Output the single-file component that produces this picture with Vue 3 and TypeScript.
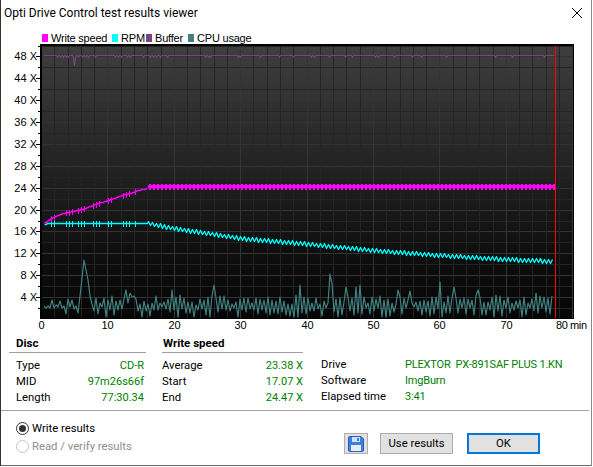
<script setup lang="ts">
const X0 = 41, PX_PER_MIN = 6.64, Y0 = 319, PX_PER_X = 5.47;

function rng(seed: number) {
  let s = seed;
  return () => {
    s = (s * 1664525 + 1013904223) % 4294967296;
    return s / 4294967296;
  };
}
function lerp(table: number[][], x: number) {
  for (let i = 1; i < table.length; i++) {
    if (x <= table[i][0]) {
      const [a, b] = [table[i - 1], table[i]];
      return a[1] + ((b[1] - a[1]) * (x - a[0])) / (b[0] - a[0]);
    }
  }
  return table[table.length - 1][1];
}
const bursts = [[50, 56], [65, 72], [78, 84], [93, 100], [107, 113], [122, 130], [134, 137]];
const inBurst = (x: number) => bursts.some(([a, b]) => x >= a && x <= b);

const speedBase = [[44, 223], [53, 217], [63, 213], [73, 211], [85, 208], [95, 204], [108, 200], [122, 195], [133, 192], [138, 190], [148, 188]];
const writeLine: string[] = [];
let writeTicks = "";
for (let x = 44; x < 148; x++) {
  const b = Math.round(lerp(speedBase, x));
  writeLine.push(`${x}.5,${b}.5`);
  if (inBurst(x) && x % 3 === 0) writeTicks += `M${x}.5 ${b - 2}V${b + 4}`;
}
for (let x = 148; x <= 553; x += 4) {
  writeTicks += `M${x + 1}.5 184V${x % 16 === 1 ? 191 : 190}M${x + 2}.5 184V190`;
}

const rpmBase = [[44, 224], [50, 222.5], [148, 223], [173, 228], [207, 233], [240, 238], [300, 243], [372, 250], [438, 255], [505, 259], [553, 261]];
const rpmLine: string[] = [];
let rpmTicks = "";
for (let x = 44; x <= 553; x++) {
  const b = Math.round(lerp(rpmBase, x));
  if (x < 148) {
    rpmLine.push(`${x}.5,${b}.5`);
    if (inBurst(x) && x % 3 === 0) rpmTicks += `M${x}.5 ${b - 2}V${b + 4}`;
  } else if (x % 4 === 0) {
    rpmLine.push(`${x}.5,${b - 2}.5`);
  } else if (x % 4 === 2) {
    rpmLine.push(`${x}.5,${b + 2}.5`);
  }
}

const dips = [57, 60, 63, 66, 68, 78, 82, 85, 88, 95, 115, 118, 121, 127, 130, 143, 150, 153, 156, 160, 167, 205, 208, 210, 238, 240, 260, 279, 293, 311, 314, 329, 345, 352, 375, 378, 394, 412, 421, 446, 495, 512, 544];
const bufferPts: string[] = [];
for (let x = 44; x <= 554; x++) {
  if (x === 74) bufferPts.push(`${x}.5,65.5`);
  else if (x === 73 || x === 75) bufferPts.push(`${x}.5,57.5`);
  else bufferPts.push(`${x}.5,${dips.includes(x) ? 57.5 : 55.5}`);
}

const peaks: Record<number, number> = { 84: 260, 86: 270, 82: 278, 88: 280, 90: 296, 115: 287, 126: 290, 130: 293, 134: 296, 172: 290, 191: 293, 214: 285, 220: 296, 300: 285, 330: 274, 332: 284, 440: 282, 454: 287, 346: 287, 356: 287, 360: 285, 410: 291, 398: 290, 478: 290, 536: 293, 552: 296 };
const r = rng(42);
const cpuPts: string[] = [];
for (let x = 44; x <= 552; x += 2) {
  const up = (x / 2) % 2 === 0;
  let y: number;
  if (peaks[x]) y = peaks[x];
  else if (x < 78) {
    y = 307 + (up ? -1 : 1) * r() * 2.5;
    if (r() > 0.82) y = up ? 297 + r() * 4 : 314;
  } else {
    y = 306 + (up ? -1 : 1) * (1 + r() * 9);
    if (r() > 0.85) y = up ? 295 + r() * 3 : 317;
  }
  cpuPts.push(`${x},${Math.round(y)}`);
}

const write = writeLine.join(" ");
const rpm = rpmLine.join(" ");
const buffer = bufferPts.join(" ");
const cpu = cpuPts.join(" ");

const ySteps = Array.from({ length: 25 }, (_, i) => (i + 1) * 2);
const xSteps = Array.from({ length: 40 }, (_, i) => (i + 1) * 2);
const py = (v: number) => Math.round(Y0 - PX_PER_X * v) + 0.5;
const px = (m: number) => Math.round(X0 + PX_PER_MIN * m) + 0.5;
const yLabels = [4, 8, 12, 16, 20, 24, 28, 32, 36, 40, 44, 48];
const xLabels = [0, 10, 20, 30, 40, 50, 60, 70];

const legend = [
  { label: "Write speed", color: "#ff00ff", width: 70 },
  { label: "RPM", color: "#00ffff", width: 34 },
  { label: "Buffer", color: "#804080", width: 42 },
  { label: "CPU usage", color: "#408080", width: 64 },
];
const disc = [["Type", "CD-R"], ["MID", "97m26s66f"], ["Length", "77:30.34"]];
const speed = [["Average", "23.38 X"], ["Start", "17.07 X"], ["End", "24.47 X"]];
const info = [["Drive", "PLEXTOR  PX-891SAF PLUS 1.KN"], ["Software", "ImgBurn"], ["Elapsed time", "3:41"]];
</script>

<template>
  <div class="window">
    <header class="titlebar">
      <span>Opti Drive Control test results viewer</span>
      <svg class="close" width="10" height="10" viewBox="0 0 10 10">
        <path d="M0 0L10 10M10 0L0 10" stroke="#000" stroke-width="1" fill="none" />
      </svg>
    </header>

    <div class="legend">
      <span v-for="item in legend" :key="item.label" class="legend-item" :style="{ width: item.width + 'px' }">
        <i class="swatch" :style="{ background: item.color }"></i>{{ item.label }}
      </span>
    </div>

    <svg class="chart" width="592" height="292" viewBox="0 44 592 292">
      <defs>
        <linearGradient id="plotbg" x1="0" y1="0" x2="0" y2="1">
          <stop offset="0" stop-color="#3e3e3e" />
          <stop offset="0.45" stop-color="#222222" />
          <stop offset="0.75" stop-color="#0f0f0f" />
          <stop offset="1" stop-color="#060606" />
        </linearGradient>
      </defs>
      <rect x="40" y="44" width="534" height="275" fill="#000" />
      <rect x="42" y="46" width="531" height="272" fill="url(#plotbg)" />
      <g shape-rendering="crispEdges" fill="none">
        <path
          v-for="v in ySteps"
          :key="'h' + v"
          :d="`M42 ${py(v)}H573`"
          :stroke="v % 4 === 0 ? '#343434' : '#242424'"
        />
        <path
          v-for="m in xSteps"
          :key="'v' + m"
          :d="`M${px(m)} 46V318`"
          :stroke="m % 10 === 0 ? '#343434' : '#242424'"
        />
        <path
          v-for="v in ySteps"
          :key="'t' + v"
          :d="`M${v % 4 === 0 ? 36 : 38} ${py(v)}H41`"
          stroke="#000"
        />
        <path d="M555.5 46V318" stroke="#ff0000" stroke-width="1" />
      </g>
      <g fill="none" stroke-linejoin="round">
        <polyline :points="buffer" stroke="#8a4a90" stroke-width="1" />
        <polyline :points="cpu" stroke="#408080" stroke-width="1.2" />
        <polyline :points="rpm" stroke="#00ffff" stroke-width="1.3" />
        <path :d="rpmTicks" stroke="#00ffff" stroke-width="1" shape-rendering="crispEdges" />
        <polyline :points="write" stroke="#ff00ff" stroke-width="1.4" />
        <path d="M148 186H553" stroke="#ff00ff" stroke-width="3" shape-rendering="crispEdges" />
        <path :d="writeTicks" stroke="#ff00ff" stroke-width="1" shape-rendering="crispEdges" />
      </g>
      <text v-for="v in yLabels" :key="'yl' + v" class="axis" x="37" :y="py(v) + 3" text-anchor="end">{{ v }} X</text>
      <text v-for="m in xLabels" :key="'xl' + m" class="axis" :x="px(m)" y="329" text-anchor="middle">{{ m }}</text>
      <text class="axis tight" x="556" y="329">80 min</text>
    </svg>

    <section class="stats">
      <div class="panel disc">
        <h3>Disc</h3>
        <dl>
          <div v-for="row in disc" :key="row[0]" class="row">
            <dt>{{ row[0] }}</dt>
            <dd>{{ row[1] }}</dd>
          </div>
        </dl>
      </div>
      <div class="panel speed">
        <h3>Write speed</h3>
        <dl>
          <div v-for="row in speed" :key="row[0]" class="row">
            <dt>{{ row[0] }}</dt>
            <dd>{{ row[1] }}</dd>
          </div>
        </dl>
      </div>
      <div class="panel info">
        <dl>
          <div v-for="row in info" :key="row[0]" class="row">
            <dt>{{ row[0] }}</dt>
            <dd>{{ row[1] }}</dd>
          </div>
        </dl>
      </div>
    </section>

    <div class="divider"></div>

    <footer class="footer">
      <div class="radios">
        <label class="radio"><i class="dot on"></i>Write results</label>
        <label class="radio off"><i class="dot"></i>Read / verify results</label>
      </div>
      <div class="buttons">
        <button class="btn save" type="button" aria-label="Save">
          <svg width="16" height="16" viewBox="0 0 16 16">
            <path d="M0.5 1.5a1 1 0 0 1 1-1H13l2.5 2.5v11.5a1 1 0 0 1-1 1H1.5a1 1 0 0 1-1-1z" fill="#3f7fe0" stroke="#2a5cb8" />
            <rect x="4" y="1" width="8" height="5" fill="#cfe0f7" />
            <rect x="9" y="2" width="2" height="3" fill="#3f7fe0" />
            <rect x="3" y="9" width="10" height="6" fill="#e8eef8" />
          </svg>
        </button>
        <button class="btn use" type="button">Use results</button>
        <button class="btn ok" type="button">OK</button>
      </div>
    </footer>
  </div>
</template>

<style scoped>
.window {
  position: relative;
  width: 592px;
  height: 466px;
  box-sizing: border-box;
  background: #fff;
  box-shadow: inset 1px 0 #3b2f2a, inset -1px 0 #8a8a8a, inset 0 -1px #6a6a6a;
  font-family: Roboto, "Open Sans", sans-serif;
  font-size: 11.3px;
  color: #000;
  display: flex;
  flex-direction: column;
  overflow: hidden;
}
.titlebar {
  box-sizing: border-box;
  height: 28px;
  flex: none;
  display: flex;
  align-items: center;
  justify-content: space-between;
  padding: 0 10px 2px 4px;
  font-size: 12px;
}
.legend {
  box-sizing: border-box;
  height: 16px;
  padding-top: 4px;
  flex: none;
  display: flex;
  align-items: center;
  padding-left: 42px;
  font-family: "Liberation Sans", sans-serif;
  font-size: 11px;
  letter-spacing: -0.2px;
}
.legend-item {
  flex: none;
  display: flex;
  align-items: center;
  gap: 3px;
}
.swatch {
  display: block;
  width: 6px;
  height: 8px;
}
.chart {
  display: block;
  flex: none;
}
.axis {
  font-family: "Liberation Sans", sans-serif;
  font-size: 11px;
  fill: #000;
}
.tight {
  letter-spacing: -0.4px;
}
.stats {
  flex: none;
  height: 74px;
  display: flex;
}
.panel h3 {
  margin: 0;
  height: 16px;
  line-height: 14px;
  font-size: 11.5px;
  font-weight: 700;
  border-bottom: 1px solid #a0a0a0;
  padding-left: 7px;
}
.panel dl {
  margin: 5px 0 0;
}
.row {
  display: flex;
  justify-content: space-between;
  height: 16px;
  line-height: 16px;
}
.row dd {
  margin: 0;
  color: #008000;
  white-space: pre;
  font-size: 11px;
}
.disc {
  width: 137px;
  margin-left: 9px;
}
.disc .row {
  padding: 0 2px 0 7px;
}
.speed {
  width: 141px;
  margin-left: 16px;
}
.speed h3 {
  padding-left: 1px;
}
.info {
  margin-left: 18px;
  padding-top: 16px;
}
.info .row {
  justify-content: flex-start;
}
.info dt {
  width: 84px;
}
.info dd {
  letter-spacing: -0.18px;
}
.divider {
  flex: none;
  height: 1px;
  margin: 0 3px 0 1px;
  background: #a0a0a0;
}
.footer {
  flex: 1;
  display: flex;
  justify-content: space-between;
  align-items: flex-start;
  padding: 10px 52px 0 16px;
}
.radios {
  display: flex;
  flex-direction: column;
  gap: 4px;
}
.radio {
  display: flex;
  align-items: center;
  gap: 3px;
  height: 14px;
}
.radio.off {
  color: #8d8d8d;
}
.dot {
  box-sizing: border-box;
  display: block;
  width: 13px;
  height: 13px;
  border-radius: 50%;
  border: 1px solid #c4c4c4;
  position: relative;
}
.dot.on {
  border-color: #333;
}
.dot.on::after {
  content: "";
  position: absolute;
  inset: 2px;
  border-radius: 50%;
  background: #333;
}
.buttons {
  display: flex;
  align-items: center;
  margin-top: 12px;
}
.btn {
  box-sizing: border-box;
  height: 21px;
  padding: 0;
  background: #e1e1e1;
  border: 1px solid #adadad;
  font: inherit;
  color: #000;
  display: flex;
  align-items: center;
  justify-content: center;
}
.save {
  width: 24px;
  margin-right: 12px;
}
.use {
  width: 73px;
  margin-right: 14px;
}
.ok {
  width: 73px;
  border: 2px solid #0078d7;
}
</style>

<style>
html, body {
  margin: 0;
  background: #fff;
}
</style>
